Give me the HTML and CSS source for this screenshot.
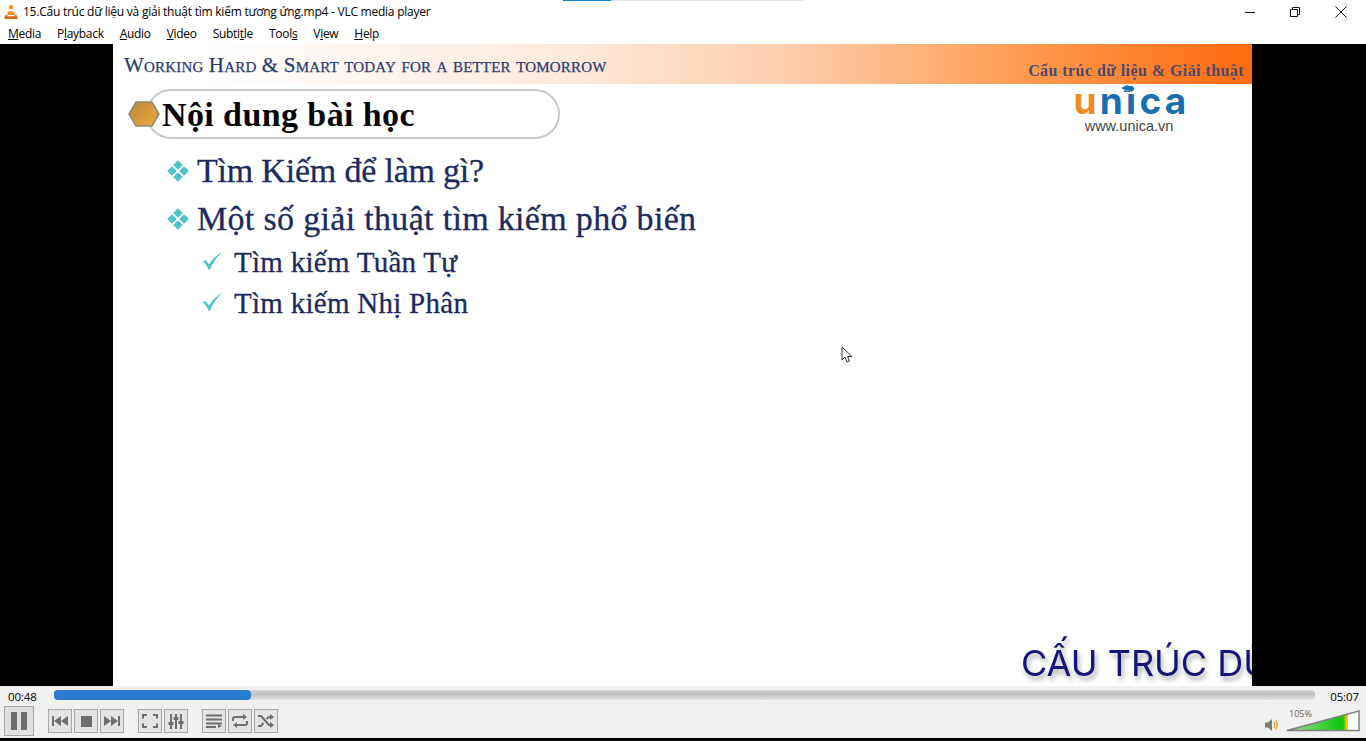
FILE: index.html
```html
<!DOCTYPE html>
<html>
<head>
  <title>VLC media player</title>
  <link rel="stylesheet" href="styles.css">
</head>
<body>
  <div class="loadbar"><div class="loadbar-done"></div></div>

  <div class="titlebar">
    <svg class="cone" width="16" height="16" viewBox="0 0 16 16">
      <path d="M6.600 1h2.800l1 4H5.600z" fill="#f08a1c"/>
      <path d="M5.700 4.800h4.600l.7 2.700H5z" fill="#eee"/>
      <path d="M5 7.500h6l.9 3.500H4.100z" fill="#f08a1c"/>
      <path d="M2.500 11h2l-.3 1.200h7.600l-.3-1.200h2l1 2.600V15H1.500v-1.400z" fill="#d9681a"/>
    </svg>
    <span class="title-text">15.Cấu trúc dữ liệu và giải thuật tìm kiếm tương ứng.mp4 - VLC media player</span>
    <div class="win-buttons">
      <svg width="10" height="10" viewBox="0 0 10 10"><path d="M0 5.500h10" stroke="#111" fill="none"/></svg>
      <svg width="10" height="10" viewBox="0 0 10 10"><path d="M.5 2.500h7v7h-7zM2.500 2.500V.5h7v7h-2" stroke="#111" fill="none"/></svg>
      <svg width="12" height="12" viewBox="0 0 12 12"><path d="M.5.5l11 11M11.500.5l-11 11" stroke="#111" fill="none"/></svg>
    </div>
  </div>

  <div class="menubar">
    <span><u>M</u>edia</span>
    <span>P<u>l</u>ayback</span>
    <span><u>A</u>udio</span>
    <span><u>V</u>ideo</span>
    <span>Subti<u>t</u>le</span>
    <span>Tool<u>s</u></span>
    <span>V<u>i</u>ew</span>
    <span><u>H</u>elp</span>
  </div>

  <div class="video">
    <div class="slide">
      <div class="band">
        <span class="motto">Working Hard &amp; Smart today for a better tomorrow</span>
        <span class="course">Cấu trúc dữ liệu &amp; Giải thuật</span>
      </div>
      <div class="slide-body">
        <div class="slide-main">
          <div class="heading">
            <svg class="hexagon" width="32" height="28" viewBox="0 0 32 28">
              <defs>
                <linearGradient id="hex" x1="0" y1="0" x2="1" y2="1">
                  <stop offset="0" stop-color="#b98a3c"/>
                  <stop offset="1" stop-color="#eeaa3e"/>
                </linearGradient>
              </defs>
              <path d="M8 2h16l7 12-7 12H8L1 14z" fill="url(#hex)" stroke="#8f8a7c" stroke-width="1.500"/>
            </svg>
            <div class="pill">Nội dung bài học</div>
          </div>
          <ul class="topics">
            <li class="topic topic-short">
              <svg class="diamonds" width="24" height="24" viewBox="0 0 24 24">
                <path d="M12 1.200l4.800 4.800-4.800 4.800-4.800-4.800zM12 13.200l4.800 4.800-4.800 4.800-4.800-4.800zM6 7.200l4.800 4.800-4.800 4.800-4.800-4.800zM18 7.200l4.800 4.800-4.800 4.800-4.800-4.800z" fill="#4cc4c4"/>
              </svg>
              <span>Tìm Kiếm để làm gì?</span>
            </li>
            <li class="topic">
              <svg class="diamonds" width="24" height="24" viewBox="0 0 24 24">
                <path d="M12 1.200l4.800 4.800-4.800 4.800-4.800-4.800zM12 13.200l4.800 4.800-4.800 4.800-4.800-4.800zM6 7.200l4.800 4.800-4.800 4.800-4.800-4.800zM18 7.200l4.800 4.800-4.800 4.800-4.800-4.800z" fill="#4cc4c4"/>
              </svg>
              <span>Một số giải thuật tìm kiếm phổ biến</span>
            </li>
            <li class="subtopic">
              <svg class="check" width="20" height="20" viewBox="0 0 20 20">
                <path d="M0 10.500l2.500-1.500 3.500 4.500C9 8.500 13.500 4 19.500 1 14 5.500 10 11 7 18.500H5.500C4.500 15.500 2.500 12.500 0 10.500z" fill="#4cc4c4"/>
              </svg>
              <span>Tìm kiếm Tuần Tự</span>
            </li>
            <li class="subtopic">
              <svg class="check" width="20" height="20" viewBox="0 0 20 20">
                <path d="M0 10.500l2.500-1.500 3.500 4.500C9 8.500 13.500 4 19.500 1 14 5.500 10 11 7 18.500H5.500C4.500 15.500 2.500 12.500 0 10.500z" fill="#4cc4c4"/>
              </svg>
              <span>Tìm kiếm Nhị Phân</span>
            </li>
          </ul>
        </div>
        <div class="brand">
          <div class="logo">
            <span class="logo-u">u</span>nica
            <svg class="logo-cap" width="12" height="8" viewBox="0 0 12 8"><path d="M6 0l6 3-6 3-6-3z" fill="#1a6fae"/><path d="M3 5l3 1.500L9 5v2H3z" fill="#1a6fae"/></svg>
          </div>
          <div class="logo-url">www.unica.vn</div>
        </div>
      </div>
      <div class="caption">CẤU TRÚC DỮ LIỆU</div>
      <svg class="pointer" width="12" height="17" viewBox="0 0 12 17">
        <path d="M1 1v13l3-3 2 5 2.500-1-2-4.500H11z" fill="#fff" stroke="#333"/>
      </svg>
    </div>
  </div>

  <div class="controls">
    <div class="seek-row">
      <span class="time">00:48</span>
      <div class="seek"><div class="seek-done"></div></div>
      <span class="time">05:07</span>
    </div>
    <div class="button-row">
      <button class="btn btn-big">
        <svg width="16" height="18" viewBox="0 0 16 18"><path d="M0 0h6v18H0zM10 0h6v18h-6z" fill="#6e6e6e"/></svg>
      </button>
      <div class="group">
        <button class="btn"><svg width="16" height="10" viewBox="0 0 16 10"><path d="M0 0h2v10H0zM9 0v10L2 5zM16 0v10L9 5z" fill="#6e6e6e"/></svg></button>
        <button class="btn"><svg width="11" height="11" viewBox="0 0 11 11"><path d="M0 0h11v11H0z" fill="#6e6e6e"/></svg></button>
        <button class="btn"><svg width="16" height="10" viewBox="0 0 16 10"><path d="M14 0h2v10h-2zM7 0v10l7-5zM0 0v10l7-5z" fill="#6e6e6e"/></svg></button>
      </div>
      <div class="group">
        <button class="btn"><svg width="16" height="14" viewBox="0 0 16 14"><path d="M1 4.500V1h4M11 1h4v3.500M15 9.500V13h-4M5 13H1V9.500" stroke="#6e6e6e" stroke-width="2" fill="none"/></svg></button>
        <button class="btn"><svg width="16" height="15" viewBox="0 0 16 15"><path d="M3 0v15M8 0v15M13 0v15" stroke="#6e6e6e" stroke-width="2" fill="none"/><path d="M.5 8h5v3h-5zM5.500 3h5v3h-5zM10.500 7h5v3h-5z" fill="#6e6e6e"/></svg></button>
      </div>
      <div class="group">
        <button class="btn"><svg width="16" height="14" viewBox="0 0 16 14"><path d="M0 1.500h16M0 5.500h16M0 9.500h16M0 13h10" stroke="#6e6e6e" stroke-width="2" fill="none"/><path d="M12 10l4 2-4 2z" fill="#6e6e6e"/></svg></button>
        <button class="btn"><svg width="16" height="14" viewBox="0 0 16 14"><path d="M1 7V5q0-2 2-2h9M15 7v2q0 2-2 2H4" stroke="#6e6e6e" stroke-width="2" fill="none"/><path d="M11 0l4 3-4 3zM5 8l-4 3 4 3z" fill="#6e6e6e"/></svg></button>
        <button class="btn"><svg width="16" height="14" viewBox="0 0 16 14"><path d="M0 2h3l8 9h2M0 12h3l2.500-3M8.500 5L11 3h2" stroke="#6e6e6e" stroke-width="2" fill="none"/><path d="M12 0l4 3-4 3zM12 8l4 3-4 3z" fill="#6e6e6e"/></svg></button>
      </div>
      <div class="volume">
        <svg width="15" height="14" viewBox="0 0 15 14">
          <path d="M0 4.500h3L7 1v12L3 9.500H0z" fill="#7d7d7d"/>
          <path d="M9 4q1.500 3 0 6M11 2.500q2.500 4.500 0 9" stroke="#f0a030" stroke-width="1.300" fill="none"/>
        </svg>
        <div class="volume-meter">
          <span class="volume-label">105%</span>
          <svg width="75" height="23" viewBox="0 0 75 23">
            <defs>
              <linearGradient id="vol" x1="0" y1="0" x2="1" y2="0">
                <stop offset="0" stop-color="#a8e0a8"/>
                <stop offset=".85" stop-color="#0fc80f"/>
                <stop offset=".93" stop-color="#20c810"/>
                <stop offset=".97" stop-color="#f0c800"/>
              </linearGradient>
            </defs>
            <path d="M1 21.500L62 5V21.500z" fill="url(#vol)"/>
            <path d="M62 5L73 2V21.500H62z" fill="#fff"/>
            <path d="M1 21.500L73 2v19.500z" fill="none" stroke="#808080" stroke-width="1.500"/>
          </svg>
        </div>
      </div>
    </div>
  </div>
  <div class="bottom-edge"></div>
</body>
</html>
```

FILE: styles.css
```css
* {
  box-sizing: border-box;
}

html, body {
  height: 100%;
}

body {
  margin: 0;
  display: flex;
  flex-direction: column;
  overflow: hidden;
  background: #fff;
  font-family: "Open Sans", "Noto Sans", sans-serif;
  font-size: 12px;
  color: #000;
}

/* thin loading line over the title bar */
.loadbar {
  position: absolute;
  left: 563px;
  top: 0;
  width: 241px;
  height: 1px;
  background: #e3e3e3;
}

.loadbar-done {
  width: 48px;
  height: 1px;
  background: #0a7ee0;
}

.titlebar {
  height: 23px;
  display: flex;
  align-items: center;
  padding-left: 3px;
  background: #fff;
}

.cone {
  margin-right: 4px;
}

.title-text {
  font-size: 12px;
  letter-spacing: -0.24px;
  white-space: nowrap;
}

.win-buttons {
  margin-left: auto;
  display: flex;
  align-items: center;
  gap: 35px;
  padding-right: 19px;
}

.menubar {
  height: 21px;
  display: flex;
  align-items: center;
  gap: 16px;
  padding-left: 8px;
  background: #fff;
  letter-spacing: -0.3px;
}

.video {
  flex: 1;
  min-height: 0;
  display: flex;
  justify-content: center;
  background: #000;
}

.slide {
  position: relative;
  width: 1139px;
  margin-left: -1px;
  display: flex;
  flex-direction: column;
  overflow: hidden;
  background: #fff;
}

.band {
  height: 40px;
  flex-shrink: 0;
  display: flex;
  justify-content: space-between;
  background: linear-gradient(90deg, #fff 0%, #fff 8%, #fde9dc 40%, #fdcda9 60%, #ff9a50 80%, #ff6a10 100%);
}

.motto {
  margin: 8px 0 0 11px;
  font-family: "Liberation Serif", serif;
  font-variant: small-caps;
  font-size: 21px;
  line-height: 26px;
  letter-spacing: 0.18px;
  color: #2b3a72;
  -webkit-text-stroke: 0.25px #2b3a72;
}

.course {
  align-self: flex-end;
  margin-right: 8px;
  padding-bottom: 3px;
  font-family: "Liberation Serif", serif;
  font-weight: bold;
  font-size: 16px;
  line-height: 20px;
  letter-spacing: 0.43px;
  color: #4b4a6a;
}

.slide-body {
  display: flex;
  justify-content: space-between;
}

.slide-main {
  padding: 5px 0 0 15px;
}

.heading {
  display: flex;
  align-items: center;
}

.hexagon {
  margin-right: -14px;
  position: relative;
  z-index: 1;
}

.pill {
  width: 414px;
  height: 50px;
  padding-left: 14px;
  border: 2px solid #c9c9c9;
  border-radius: 25px;
  background: #fff;
  font-family: "Liberation Serif", serif;
  font-weight: bold;
  font-size: 34px;
  line-height: 48px;
  letter-spacing: 0.4px;
  color: #050505;
}

.topics {
  list-style: none;
  margin: 8px 0 0;
  padding: 0;
  color: #1c2a5c;
  font-family: "Liberation Serif", serif;
  -webkit-text-stroke: 0.3px #1c2a5c;
}

.topic {
  display: flex;
  align-items: center;
  gap: 7px;
  height: 48px;
  padding-left: 38px;
  font-size: 34px;
  letter-spacing: 0.32px;
}

.topic-short {
  letter-spacing: -0.2px;
}

.subtopic {
  display: flex;
  align-items: center;
  gap: 11px;
  height: 41px;
  padding: 0 0 2px 75px;
  font-size: 29px;
  letter-spacing: 0.27px;
}

.check {
  position: relative;
  top: -2px;
}

.brand {
  width: 178px;
  margin-right: 34px;
  display: flex;
  flex-direction: column;
  align-items: center;
}

.logo {
  position: relative;
  margin-left: 5px;
  font-family: Inter, "Liberation Sans", sans-serif;
  font-weight: 700;
  font-size: 37px;
  line-height: 33px;
  letter-spacing: 3.3px;
  color: #1a6fae;
}

.logo-u {
  color: #ee8b22;
}

/* little graduation cap sitting on the i */
.logo-cap {
  position: absolute;
  left: 48px;
  top: 1px;
}

.logo-url {
  margin-top: 1px;
  font-family: "Liberation Sans", sans-serif;
  font-size: 14.500px;
  line-height: 16px;
  color: #444;
}

/* subtitle burnt into the video, cut off by the slide edge */
.caption {
  position: absolute;
  left: 908px;
  bottom: 1px;
  white-space: nowrap;
  font-family: Inter, "Liberation Sans", sans-serif;
  font-size: 36px;
  line-height: 44px;
  color: #14147a;
  text-shadow: 2px 4px 5px #aaa;
  filter: blur(0.4px);
}

.pointer {
  position: absolute;
  left: 728px;
  top: 302px;
}

.controls {
  height: 52px;
  flex-shrink: 0;
  background: #f0f0f0;
  padding: 0 4px;
}

.seek-row {
  height: 18px;
  display: flex;
  align-items: center;
  gap: 16px;
  padding: 2px 3px 0 4px;
}

.time {
  font-family: "Open Sans", sans-serif;
  font-size: 11.500px;
  letter-spacing: -0.1px;
}

.seek {
  flex: 1;
  height: 10px;
  margin: -2px -1px 0 1px;
  border-radius: 4px;
  background: linear-gradient(#d6d6d6, #c0c0c0 40%, #e2e2e2);
}

.seek-done {
  width: 197px;
  height: 10px;
  border-radius: 4px;
  background: #2a7bd0;
}

.button-row {
  height: 34px;
  display: flex;
  align-items: center;
}

.group {
  display: flex;
  gap: 2px;
  margin-left: 14px;
}

.btn {
  width: 24px;
  height: 24px;
  padding: 0;
  display: flex;
  align-items: center;
  justify-content: center;
  background: #e4e4e4;
  border: 1px solid #a8a8a8;
}

.btn-big {
  width: 30px;
  height: 30px;
  background: #e0e0e0;
}

.volume {
  margin-left: auto;
  display: flex;
  align-items: flex-end;
  gap: 6px;
  padding-right: 1px;
  padding-bottom: 2px;
}

.volume-meter {
  position: relative;
  height: 23px;
}

.volume-label {
  position: absolute;
  left: 3px;
  top: -1px;
  font-size: 9px;
  line-height: 12px;
  color: #666;
}

.bottom-edge {
  height: 3px;
  flex-shrink: 0;
  background: #000;
}
```
